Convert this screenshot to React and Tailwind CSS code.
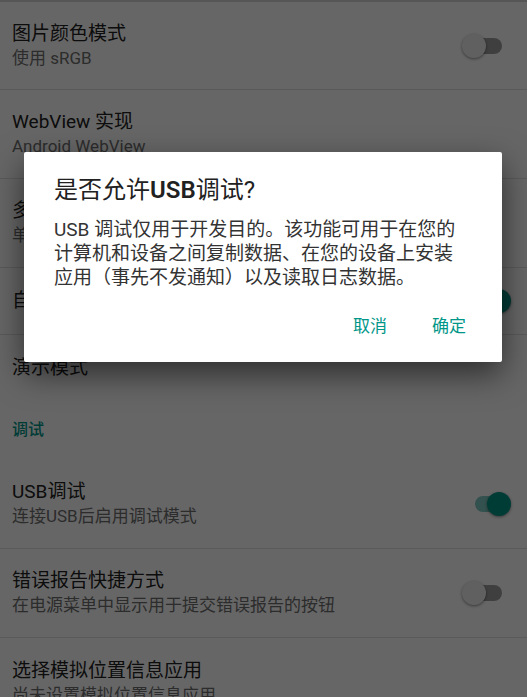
import React from "react";

const Switch = ({ on }) => {
  if (on) {
    return (
      <div className="relative w-[40px] h-[24px] mr-[16px] shrink-0">
        <div className="absolute left-[4px] top-[4px] w-[36px] h-[16px] rounded-full bg-[#009688]/50" />
        <div className="absolute right-0 top-0 w-[24px] h-[24px] rounded-full bg-[#009688] shadow-[0_1px_3px_rgba(0,0,0,0.45)]" />
      </div>
    );
  }
  return (
    <div className="relative w-[40px] h-[24px] mr-[25px] shrink-0">
      <div className="absolute left-[4px] top-[4px] w-[36px] h-[16px] rounded-full bg-black/[0.38]" />
      <div className="absolute left-0 top-0 w-[24px] h-[24px] rounded-full bg-[#f1f1f1] shadow-[0_1px_3px_rgba(0,0,0,0.45)]" />
    </div>
  );
};

const Item = ({ title, summary, toggle, h, divider = true }) => (
  <div
    className={`flex items-center pl-[12px] ${divider ? "border-b border-[#e0e0e0]" : ""}`}
    style={{ height: h }}
  >
    <div className="flex-1 flex flex-col justify-center min-w-0">
      <div className="text-[19px] leading-[24px] text-[#212121] whitespace-nowrap">{title}</div>
      {summary && (
        <div className="text-[17px] leading-[24px] text-[#6f6f6f] whitespace-nowrap">{summary}</div>
      )}
    </div>
    {toggle !== undefined && <Switch on={toggle} />}
  </div>
);

export default function App() {
  return (
    <div className="relative w-[527px] h-[697px] overflow-hidden bg-white font-['Roboto','Noto_Sans_CJK_SC',sans-serif]">
      {/* settings list */}
      <div className="flex flex-col">
        <div className="h-[2px] bg-[#d6d6d6]" />
        <Item h={88} title="图片颜色模式" summary="使用 sRGB" toggle={false} />
        <Item h={89} title="WebView 实现" summary="Android WebView" />
        <Item h={89} title="多进程 WebView" summary="单独运行 WebView 渲染程序" toggle={false} />
        <Item h={67} title="自动系统更新" toggle={true} />
        <Item h={65} title="演示模式" divider={false} />
        <div className="h-[59px] flex items-center pl-[12px] text-[16px] font-medium text-[#009688]">
          调试
        </div>
        <Item h={90} title="USB调试" summary="连接USB后启用调试模式" toggle={true} />
        <Item h={89} title="错误报告快捷方式" summary="在电源菜单中显示用于提交错误报告的按钮" toggle={false} />
        <Item h={89} title="选择模拟位置信息应用" summary="尚未设置模拟位置信息应用" divider={false} />
      </div>

      {/* scrim */}
      <div className="absolute inset-0 bg-black/60" />

      {/* dialog */}
      <div className="absolute top-[152px] left-[24px] w-[478px] h-[210px] bg-white rounded-[2px] shadow-[0_12px_32px_rgba(0,0,0,0.55)] flex flex-col pt-[23px] px-[30px]">
        <div className="text-[24px] leading-[30px] text-[#212121]">
          是否允许<span className="font-semibold">USB</span>调试?
        </div>
        <div className="mt-[13px] text-[19px] leading-[24px] text-[#333333] whitespace-nowrap">
          USB 调试仅用于开发目的。该功能可用于在您的
          <br />
          计算机和设备之间复制数据、在您的设备上安装
          <br />
          应用（事先不发通知）以及读取日志数据。
        </div>
        <div className="mt-[15px] flex justify-end gap-[25px] mr-[-4px]">
          <button className="h-[44px] px-[10px] text-[17px] text-[#009688]">取消</button>
          <button className="h-[44px] px-[10px] text-[17px] text-[#009688]">确定</button>
        </div>
      </div>
    </div>
  );
}
